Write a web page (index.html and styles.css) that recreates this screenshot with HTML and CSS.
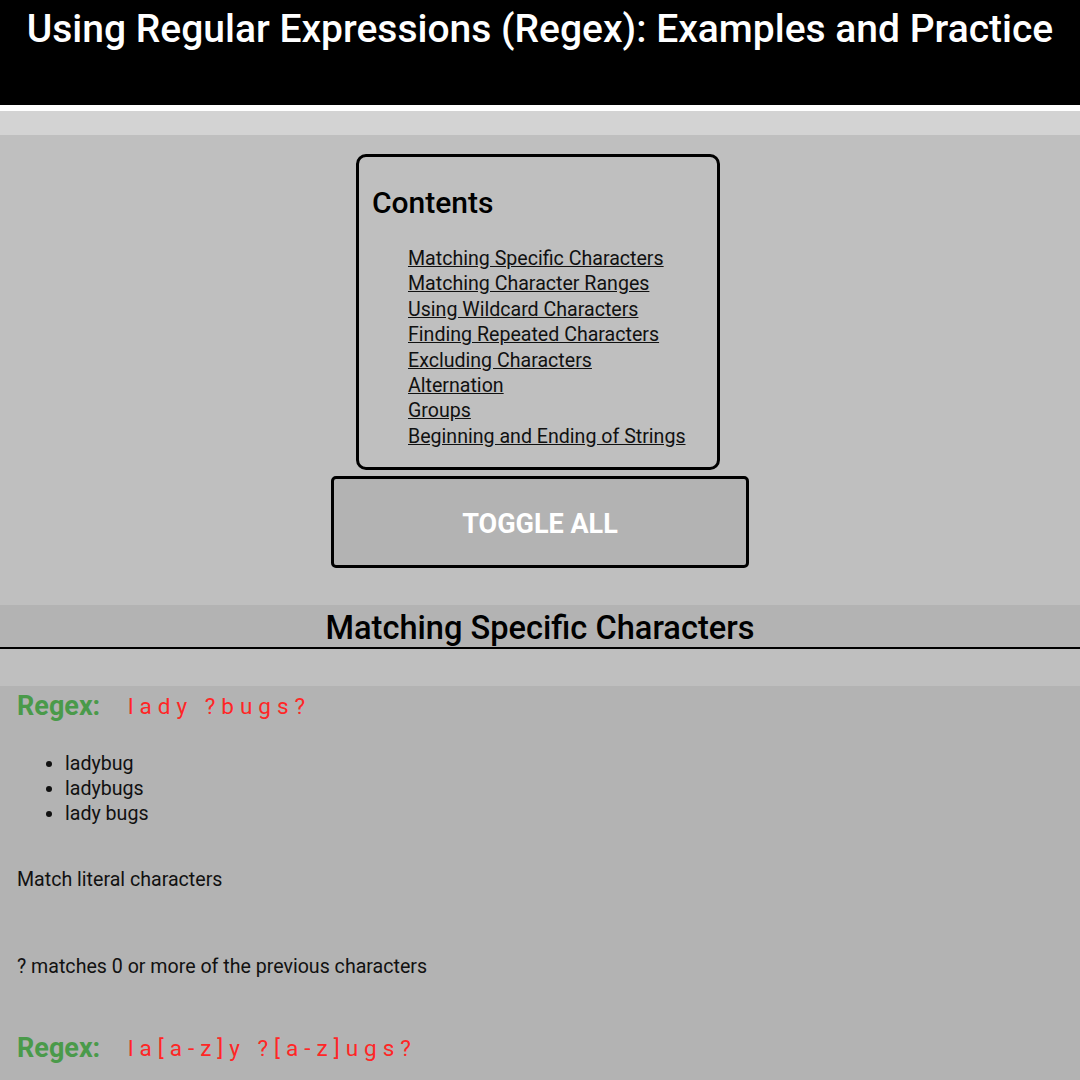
FILE: index.html
```html
<!DOCTYPE html>
<html>
<head>
<meta charset="utf-8">
<link rel="stylesheet" href="styles.css">
</head>
<body>
<header class="top">
  <h1 class="title">Using Regular Expressions (Regex): Examples and Practice</h1>
</header>
<div class="strip"></div>
<div class="intro">
  <nav class="toc">
    <h2 class="toc-title">Contents</h2>
    <ul class="toc-list">
      <li><a href="#">Matching Specific Characters</a></li>
      <li><a href="#">Matching Character Ranges</a></li>
      <li><a href="#">Using Wildcard Characters</a></li>
      <li><a href="#">Finding Repeated Characters</a></li>
      <li><a href="#">Excluding Characters</a></li>
      <li><a href="#">Alternation</a></li>
      <li><a href="#">Groups</a></li>
      <li><a href="#">Beginning and Ending of Strings</a></li>
    </ul>
  </nav>
  <button class="toggle">TOGGLE ALL</button>
</div>
<h2 class="section-title">Matching Specific Characters</h2>
<div class="gap"></div>
<section class="section-body">
  <div class="regex"><span class="regex-label">Regex:</span><span class="regex-code">lady ?bugs?</span></div>
  <ul class="matches">
    <li>ladybug</li>
    <li>ladybugs</li>
    <li>lady bugs</li>
  </ul>
  <p class="note note-first">Match literal characters</p>
  <p class="note note-second">? matches 0 or more of the previous characters</p>
  <div class="regex regex-next"><span class="regex-label">Regex:</span><span class="regex-code">la[a-z]y ?[a-z]ugs?</span></div>
</section>
</body>
</html>
```
FILE: styles.css
```css
html, body {
  margin: 0;
  padding: 0;
}
body {
  font-family: Roboto, "Liberation Sans", sans-serif;
  font-size: 19.6px;
  color: #111;
  background: #b3b3b3;
}
.top {
  background: #000;
  height: 105px;
  border-bottom: 6px solid #fff;
}
.title {
  margin: 0;
  padding-top: 6px;
  font-size: 39px;
  line-height: 47px;
  font-weight: 500;
  color: #fff;
  text-align: center;
}
.strip {
  height: 24px;
  background: #d3d3d3;
}
.intro {
  background: #bfbfbf;
  padding: 19px 0 37px;
  display: flex;
  flex-direction: column;
  align-items: center;
  gap: 6px;
}
.toc {
  width: 345px;
  margin-right: 4px;
  border: 3px solid #000;
  border-radius: 10px;
  padding: 29px 0 18px 13px;
  box-sizing: content-box;
}
.toc-title {
  margin: 0;
  font-size: 30px;
  line-height: 33px;
  font-weight: 500;
  color: #000;
}
.toc-list {
  list-style: none;
  margin: 27px 0 0;
  padding-left: 36px;
  line-height: 25.4px;
}
.toc-list a {
  color: #111;
  text-decoration: underline;
}
.toggle {
  width: 418px;
  height: 92px;
  border: 3px solid #000;
  border-radius: 5px;
  background: #b3b3b3;
  color: #fff;
  font-family: Roboto, "Liberation Sans", sans-serif;
  font-size: 27px;
  font-weight: 700;
  padding: 4px 0 0;
}
.section-title {
  margin: 0;
  height: 42px;
  background: #b3b3b3;
  border-bottom: 2px solid #000;
  text-align: center;
  font-size: 32.6px;
  line-height: 46px;
  font-weight: 500;
  color: #000;
}
.gap {
  height: 37px;
  background: #bfbfbf;
}
.section-body {
  padding: 0 17px;
}
.regex {
  height: 40px;
  display: flex;
  align-items: center;
}
.regex-label {
  color: #4a9a4a;
  font-size: 27px;
  font-weight: 700;
  width: 111px;
}
.regex-code {
  color: #ff2626;
  font-size: 22.5px;
  font-weight: 400;
  letter-spacing: 6px;
}
.matches {
  margin: 25px 0 0;
  padding-left: 48px;
  line-height: 25px;
}
.note {
  margin: 0;
  line-height: 25px;
}
.note-first {
  margin-top: 41px;
}
.note-second {
  margin-top: 62px;
}
.regex-next {
  margin-top: 49px;
}
```
